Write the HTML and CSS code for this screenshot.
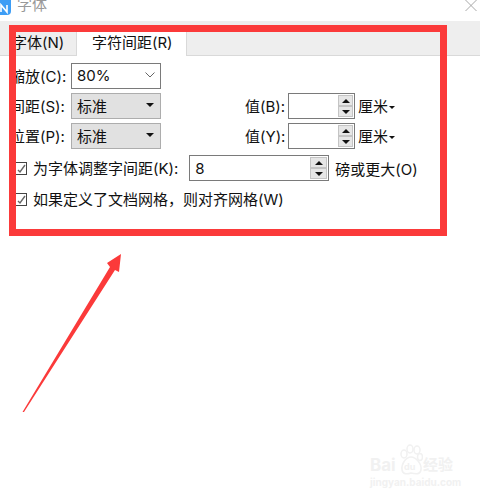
FILE: index.html
```html
<!DOCTYPE html>
<html lang="zh-CN">

<head>
    <meta charset="UTF-8">
    <meta name="viewport" content="width=device-width, initial-scale=1.0">
    <title>字体</title>
    <link rel="stylesheet" href="styles.css">
</head>

<body>
    <div class="titlebar">
        <div class="app-icon">
            <svg width="11" height="15" viewBox="0 0 11 15">
                <path d="M1 12 L1 5 L7 12 L7 5" stroke="white" stroke-width="1.6" fill="none" />
            </svg>
        </div>
        <div class="title">字体</div>
        <svg class="close" width="12" height="12" viewBox="0 0 12 12">
            <path d="M0.5 0 L11.5 11 M11.5 0 L0.5 11" stroke="#a8a8a8" stroke-width="1" fill="none" />
        </svg>
    </div>

    <div class="tabs">
        <div class="tab">字体(N)</div>
        <div class="tab active">字符间距(R)</div>
    </div>

    <div class="panel">
        <div class="row">
            <div class="label">缩放(C):</div>
            <div class="combo">
                <span>80%</span>
                <svg width="10" height="6" viewBox="0 0 10 6">
                    <path d="M0.5 0.5 L5 5 L9.5 0.5" stroke="#666" stroke-width="1" fill="none" />
                </svg>
            </div>
        </div>

        <div class="row">
            <div class="label">间距(S):</div>
            <div class="combo gray">
                <span>标准</span>
                <div class="caret"></div>
            </div>
            <div class="label value-label">值(B):</div>
            <div class="spin small">
                <div class="spin-btns">
                    <div class="spin-btn"><div class="up"></div></div>
                    <div class="spin-btn"><div class="down"></div></div>
                </div>
            </div>
            <div class="unit">厘米<div class="caret tiny"></div></div>
        </div>

        <div class="row">
            <div class="label">位置(P):</div>
            <div class="combo gray">
                <span>标准</span>
                <div class="caret"></div>
            </div>
            <div class="label value-label">值(Y):</div>
            <div class="spin small">
                <div class="spin-btns">
                    <div class="spin-btn"><div class="up"></div></div>
                    <div class="spin-btn"><div class="down"></div></div>
                </div>
            </div>
            <div class="unit">厘米<div class="caret tiny"></div></div>
        </div>

        <div class="row kerning">
            <div class="checkbox">
                <svg width="10" height="11" viewBox="0 0 10 11">
                    <path d="M2 7 L4 9 L9 2" stroke="#666" stroke-width="1.4" fill="none" />
                </svg>
            </div>
            <div class="check-text">为字体调整字间距(K):</div>
            <div class="spin wide">
                <span>8</span>
                <div class="spin-btns">
                    <div class="spin-btn"><div class="up"></div></div>
                    <div class="spin-btn"><div class="down"></div></div>
                </div>
            </div>
            <div class="after-spin">磅或更大(O)</div>
        </div>

        <div class="row grid-row">
            <div class="checkbox">
                <svg width="10" height="11" viewBox="0 0 10 11">
                    <path d="M2 7 L4 9 L9 2" stroke="#666" stroke-width="1.4" fill="none" />
                </svg>
            </div>
            <div class="check-text">如果定义了文档网格，则对齐网格(W)</div>
        </div>
    </div>

    <!-- red annotation drawn over the dialog -->
    <div class="red-box"></div>
    <svg class="arrow" width="480" height="498" viewBox="0 0 480 498">
        <polygon points="22.5,412 110,267 107,263 121,254 119,272 115,270 24,412" fill="#fb3a3a" />
    </svg>

    <div class="watermark">
        <div class="wm-top">
            <span class="wm-bai">Bai</span>
            <svg class="wm-paw" width="24" height="32" viewBox="0 0 24 32">
                <g fill="none" stroke="#f1f1f1" stroke-width="1.5">
                    <ellipse cx="5" cy="10" rx="3" ry="4" />
                    <ellipse cx="11" cy="5" rx="3" ry="4" />
                    <ellipse cx="18" cy="6" rx="3" ry="4" />
                    <ellipse cx="21" cy="13" rx="2.5" ry="3.5" />
                    <path d="M12 13 C7 13 2 20 3 26 C4 31 9 30 12 29 C16 30 21 31 22 26 C23 20 17 13 12 13 Z" />
                </g>
                <text x="5" y="26" class="wm-du">du</text>
            </svg>
            <span class="wm-jy">经验</span>
        </div>
        <div class="wm-url">jingyan.baidu.com</div>
    </div>
</body>

</html>
```

FILE: styles.css
```css
body {
    font-family: Inter, "Noto Sans CJK SC", sans-serif;
    font-size: 15px;
    color: #111;
    background: white;
    margin: 0;
    height: 498px;
    overflow: hidden;
}

.titlebar {
    display: flex;
    height: 21px;
    overflow: hidden;
}

.app-icon {
    width: 11px;
    height: 15px;
    background: #3d9df5;
    border-radius: 0 0 4px 0;
}

.title {
    margin-left: 6px;
    margin-top: -5px;
    color: #999;
    line-height: 20px;
}

.close {
    margin-left: auto;
    margin-right: 3px;
}

.tabs {
    display: flex;
    height: 35px;
    align-items: flex-end;
    box-sizing: border-box;
    background: #eeeeee;
    border-bottom: 1px solid #d9d9d9;
}

.tab {
    box-sizing: border-box;
    width: 76px;
    height: 24px;
    padding-left: 12px;
    line-height: 23px;
    white-space: nowrap;
}

.tab.active {
    width: 111px;
    height: 25px;
    margin-bottom: -1px;
    padding-left: 15px;
    background: white;
    border-left: 1px solid #d9d9d9;
    border-right: 1px solid #d9d9d9;
}

.panel {
    padding: 7px 0 0 10px;
}

.row {
    display: flex;
    align-items: center;
    height: 26px;
    margin-bottom: 4px;
}

.label {
    width: 61px;
    flex: none;
    padding-bottom: 2px;
    white-space: nowrap;
}

.value-label {
    width: 43px;
    margin-left: 84px;
}

.combo {
    box-sizing: border-box;
    display: flex;
    align-items: center;
    justify-content: space-between;
    width: 90px;
    height: 26px;
    padding: 0 5px 2px;
    border: 1px solid #7a7a7a;
}

.combo.gray {
    padding-right: 6px;
    background: #e1e1e1;
    border-color: #adadad;
}

.caret {
    width: 0;
    height: 0;
    border-left: 4px solid transparent;
    border-right: 4px solid transparent;
    border-top: 4px solid #111;
}

.caret.tiny {
    display: inline-block;
    margin-left: 1px;
    vertical-align: 3px;
    border-left-width: 3px;
    border-right-width: 3px;
    border-top-width: 3px;
}

.spin {
    box-sizing: border-box;
    display: flex;
    align-items: center;
    justify-content: space-between;
    height: 26px;
    padding: 0 1px 0 5px;
    border: 1px solid #7a7a7a;
}

.spin.small {
    width: 67px;
    justify-content: flex-end;
}

.spin.wide {
    width: 140px;
    margin-left: 11px;
}

.spin-btns {
    display: flex;
    flex-direction: column;
    width: 15px;
    height: 22px;
}

.spin.wide .spin-btns {
    width: 17px;
}

.spin-btn {
    box-sizing: border-box;
    display: flex;
    flex: 1;
    align-items: center;
    justify-content: center;
    background: #e6e6e6;
    border: 1px solid #c4c4c4;
}

.up,
.down {
    width: 0;
    height: 0;
    border-left: 4px solid transparent;
    border-right: 4px solid transparent;
}

.up {
    border-bottom: 4px solid #111;
}

.down {
    border-top: 4px solid #111;
}

.unit {
    margin-left: 3px;
    padding-bottom: 2px;
    white-space: nowrap;
}

.kerning {
    margin-top: 6px;
    margin-bottom: 5px;
}

.grid-row {
    height: 26px;
}

.checkbox {
    box-sizing: border-box;
    display: flex;
    align-items: center;
    justify-content: center;
    width: 12px;
    height: 13px;
    margin-left: 5px;
    border: 1px solid #444;
}

.check-text {
    margin-left: 6px;
    padding-bottom: 1px;
    white-space: nowrap;
}

.after-spin {
    margin-left: 6px;
    white-space: nowrap;
}

.red-box {
    position: absolute;
    left: 9px;
    top: 25px;
    width: 424px;
    height: 197px;
    border: 7px solid #fb3a3a;
}

.arrow {
    position: absolute;
    left: 0;
    top: 0;
}

.watermark {
    position: absolute;
    left: 370px;
    top: 444px;
    width: 84px;
    color: #f1f1f1;
}

.wm-top {
    display: flex;
    align-items: flex-end;
    height: 32px;
}

.wm-bai {
    width: 29px;
    font-size: 17px;
    font-weight: bold;
    line-height: 22px;
    white-space: nowrap;
}

.wm-du {
    font-size: 9px;
    font-weight: bold;
    fill: #f1f1f1;
}

.wm-jy {
    font-size: 15px;
    font-weight: bold;
    line-height: 22px;
    white-space: nowrap;
}

.wm-url {
    font-size: 10px;
    font-weight: bold;
    line-height: 13px;
    white-space: nowrap;
}
```
